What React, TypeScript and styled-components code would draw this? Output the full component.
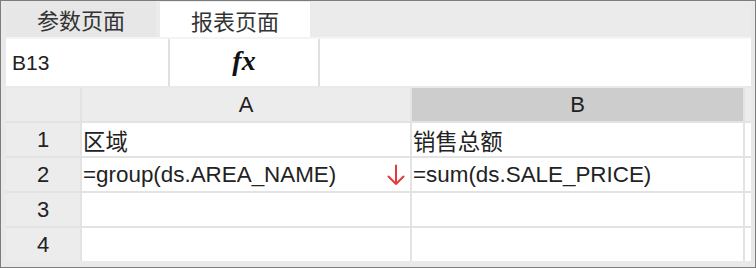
import React from "react";
import styled, { createGlobalStyle } from "styled-components";

const GlobalStyle = createGlobalStyle`
  html, body {
    margin: 0;
    padding: 0;
    background: #ffffff;
  }
  * {
    box-sizing: border-box;
  }
`;

const Frame = styled.div`
  width: 756px;
  height: 268px;
  border: 1px solid #7d7d7d;
  background: #e9e9e9;
  padding: 0 4px 0 5px;
  display: flex;
  flex-direction: column;
  font-family: "Liberation Sans", "Noto Sans CJK SC", sans-serif;
  color: #222;
  overflow: hidden;
`;

const TabStrip = styled.div`
  height: 36px;
  display: flex;
  gap: 4px;
  background: #ebebeb;
`;

const Tab = styled.div<{ $active?: boolean }>`
  width: 150px;
  margin-top: ${({ $active }) => ($active ? "1px" : "0")};
  display: flex;
  align-items: center;
  justify-content: center;
  font-size: 22px;
  color: #333;
  background: ${({ $active }) => ($active ? "#ffffff" : "#e7e7e7")};
`;

const FormulaBar = styled.div`
  height: 49px;
  border-top: 2px solid #f4f4f4;
  display: grid;
  grid-template-columns: 162px 2px 148px 2px 1fr;
  background: #ffffff;
`;

const NameBox = styled.div`
  display: flex;
  align-items: center;
  padding-left: 6px;
  font-size: 21px;
`;

const Divider = styled.div`
  background: #e0e0e0;
`;

const FxBox = styled.div`
  display: flex;
  align-items: center;
  justify-content: center;
  font-family: "Liberation Serif", "DejaVu Serif", serif;
  font-style: italic;
  font-weight: bold;
  font-size: 28px;
  color: #111;
  padding-bottom: 4px;
`;

const Sheet = styled.div`
  margin-top: 2px;
  display: grid;
  grid-template-columns: 74px 328px 331px 1fr;
  grid-auto-rows: 33px;
  gap: 2px;
  background: #e3e3e3;
`;

const HeadCell = styled.div<{ $selected?: boolean }>`
  display: flex;
  align-items: center;
  justify-content: center;
  font-size: 22px;
  color: #222;
  background: ${({ $selected }) => ($selected ? "#cdcdcd" : "#ececec")};
`;

const Cell = styled.div`
  display: flex;
  align-items: center;
  padding-left: 1px;
  font-size: 22.4px;
  color: #222;
  background: #ffffff;
  white-space: nowrap;
`;

const ExpandArrow = styled.svg`
  margin-left: auto;
  margin-right: 5px;
  flex: none;
`;

const DownArrow = () => (
  <ExpandArrow width="18" height="22" viewBox="0 0 18 22">
    <path
      d="M9 1.5 V20 M1.5 12.5 L9 20 L16.5 12.5"
      fill="none"
      stroke="#e8393a"
      strokeWidth="2"
      strokeLinecap="round"
      strokeLinejoin="round"
    />
  </ExpandArrow>
);

const rows: { a: string; b: string; arrow?: boolean }[] = [
  { a: "区域", b: "销售总额" },
  { a: "=group(ds.AREA_NAME)", b: "=sum(ds.SALE_PRICE)", arrow: true },
  { a: "", b: "" },
  { a: "", b: "" },
];

const App = () => {
  return (
    <>
      <GlobalStyle />
      <Frame>
        <TabStrip>
          <Tab>参数页面</Tab>
          <Tab $active>报表页面</Tab>
        </TabStrip>
        <FormulaBar>
          <NameBox>B13</NameBox>
          <Divider />
          <FxBox>fx</FxBox>
          <Divider />
          <div />
        </FormulaBar>
        <Sheet>
          <HeadCell />
          <HeadCell>A</HeadCell>
          <HeadCell $selected>B</HeadCell>
          <HeadCell />
          {rows.map((row, i) => (
            <React.Fragment key={i}>
              <HeadCell>{i + 1}</HeadCell>
              <Cell>
                {row.a}
                {row.arrow && <DownArrow />}
              </Cell>
              <Cell>{row.b}</Cell>
              <Cell />
            </React.Fragment>
          ))}
        </Sheet>
      </Frame>
    </>
  );
};

export default App;
